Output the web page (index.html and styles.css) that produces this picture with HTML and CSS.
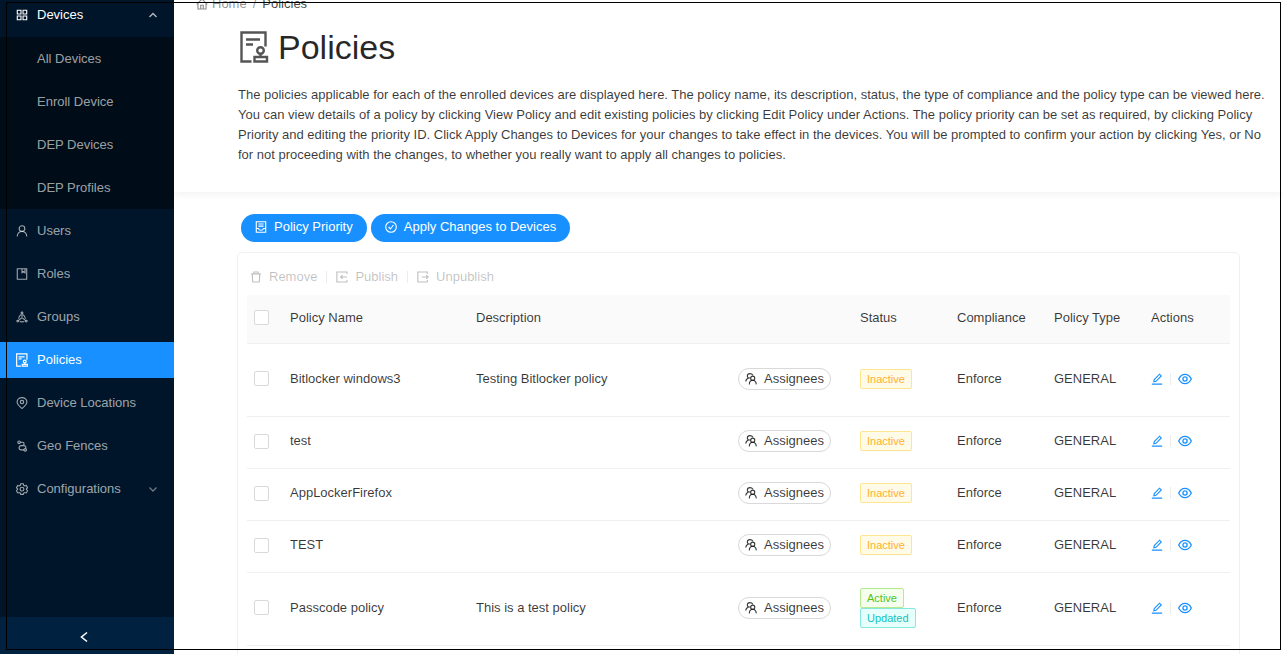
FILE: index.html
```html
<!DOCTYPE html>
<html lang="en">
<head>
<meta charset="utf-8">
<title>Policies</title>
<link rel="stylesheet" href="styles.css">
</head>
<body>
<svg class="sprite" aria-hidden="true">
  <symbol id="apps" viewBox="0 0 14 14"><path d="M1.500 1.500h4.300v4.300H1.500zM8.200 1.500h4.300v4.300H8.200zM1.500 8.200h4.300v4.300H1.500zM8.200 8.200h4.300v4.300H8.200z"/></symbol>
  <symbol id="user" viewBox="0 0 14 14"><circle cx="7" cy="4.200" r="3.300"/><path d="M1.400 13.500C1.600 10.200 3.600 7.600 7 7.600s5.400 2.600 5.600 5.900"/></symbol>
  <symbol id="book" viewBox="0 0 14 14"><path d="M1.500 .8h11v12.400h-11zM7 .8v4.700l1.800-1.400 1.700 1.400V.8"/></symbol>
  <symbol id="nodes" viewBox="0 0 14 14"><circle cx="7" cy="2.300" r="1"/><circle cx="2" cy="11.800" r="1"/><circle cx="12" cy="11.800" r="1"/><path d="M7 3.500v4M6.700 8 3 11M7.300 8l3.700 3M5.600 4.200C4.200 5.500 3.200 7 3 9M8.400 4.200C9.800 5.500 10.800 7 11 9M4.300 12.300c1.700.5 3.700.5 5.400 0"/></symbol>
  <symbol id="audit" viewBox="0 0 28 32"><path d="M11.500 30.500H1.500v-29h24v14M6 8.500h14M6 13.500h7"/><circle cx="20.500" cy="19.500" r="3.300"/><path d="M20.500 22.800v3.200M14.500 26h12.500v4.500H14.500z"/></symbol>
  <symbol id="pin" viewBox="0 0 14 14"><path d="M7 13.400C4.200 11.200 1.300 9 1.300 5.900 1.300 2.900 3.800.7 7 .7s5.700 2.200 5.700 5.200c0 3.100-2.900 5.300-5.700 7.500z"/><circle cx="7" cy="5.900" r="2"/></symbol>
  <symbol id="route" viewBox="0 0 14 14"><circle cx="3.600" cy="2.700" r="1.500"/><circle cx="10.800" cy="11.500" r="1.500"/><path d="M5.100 2.700h2.400c2.600 0 2.600 3.800 0 3.800H6c-3.200 0-3.200 5 0 5h3.300M5.500 6.600h3.700c2 0 2.700 1.500 2 3"/></symbol>
  <symbol id="gear" viewBox="0 0 14 14"><path d="M5.500.9h3l.5 1.800 1.200.7 1.800-.5 1.500 2.600-1.300 1.300v.9l1.300 1.300-1.500 2.600-1.800-.5-1.200.7-.5 1.500h-3L5 11.800l-1.200-.7-1.800.5L.5 9l1.300-1.300v-.9L.5 5.500 2 2.900l1.800.5L5 2.700z"/><circle cx="7" cy="7.200" r="2.200"/></symbol>
  <symbol id="up" viewBox="0 0 10 10"><path d="M1.500 7 5 3.500 8.500 7"/></symbol>
  <symbol id="down" viewBox="0 0 10 10"><path d="M1.500 3.500 5 7l3.500-3.500"/></symbol>
  <symbol id="left" viewBox="0 0 12 12"><path d="M9 1.500 3.500 6 9 10.500"/></symbol>
  <symbol id="home" viewBox="0 0 14 14"><path d="M.8 7.400 7 1.200l6.200 6.200M2.300 6.500v6.300h9.400V6.500M5.500 12.800V8.500h3v4.300"/></symbol>
  <symbol id="list" viewBox="0 0 14 14"><path d="M1.500.8h11v12.400h-11zM4 3.500h6M4 6h6M1.500 8.800h2.700c.3 1.200 1.400 2 2.800 2s2.500-.8 2.800-2h2.700"/></symbol>
  <symbol id="check" viewBox="0 0 14 14"><circle cx="7" cy="7" r="6.200"/><path d="m4.200 7 2.100 2.300 3.500-4.600"/></symbol>
  <symbol id="trash" viewBox="0 0 14 14"><path d="M1.300 3.400h11.400M4.500 3.400V1.200h5v2.200M2.600 3.400l.5 9.400h7.800l.5-9.400"/></symbol>
  <symbol id="import" viewBox="0 0 14 14"><path d="M12.800 3.500V1.200H1v11.600h11.800v-2.300M13 7H5.500M7.600 5 5.400 7l2.200 2"/></symbol>
  <symbol id="export" viewBox="0 0 14 14"><path d="M12 3.500V1.200H1v11.600h11v-2.300M5.500 7h7.500M10.900 5l2.200 2-2.200 2"/></symbol>
  <symbol id="team" viewBox="0 0 14 14"><circle cx="9" cy="6" r="2.400"/><path d="M5 13.300c.1-2.900 1.600-4.800 4-4.800s3.900 1.900 4.200 4.800M9.200 2.600C8.500 1.300 7.200.7 5.800.7 4 .7 2.700 1.900 2.700 3.500c0 1 .5 1.800 1.400 2.300C2 6.500 1 7.900.9 10M4.100 5.800l2.200.1"/></symbol>
  <symbol id="edit" viewBox="0 0 14 14"><path d="M1 13h12M3.300 10.300l.5-2.600L10 1.400l2 2-6.200 6.300z"/></symbol>
  <symbol id="eye" viewBox="0 0 14 12"><path d="M.7 6C2.100 3.100 4.200 1.300 7 1.300S11.900 3.100 13.300 6C11.900 8.900 9.800 10.700 7 10.700S2.100 8.900.7 6z"/><circle cx="7" cy="6" r="2.100"/></symbol>
</svg>

<div class="layout">
  <aside class="sidebar">
    <nav class="menu">
      <a class="item item-top open" href="#"><svg class="icon"><use href="#apps"/></svg><span>Devices</span><svg class="arrow"><use href="#up"/></svg></a>
      <div class="submenu">
        <a class="subitem" href="#">All Devices</a>
        <a class="subitem" href="#">Enroll Device</a>
        <a class="subitem" href="#">DEP Devices</a>
        <a class="subitem" href="#">DEP Profiles</a>
      </div>
      <a class="item" href="#"><svg class="icon"><use href="#user"/></svg><span>Users</span></a>
      <a class="item" href="#"><svg class="icon"><use href="#book"/></svg><span>Roles</span></a>
      <a class="item" href="#"><svg class="icon"><use href="#nodes"/></svg><span>Groups</span></a>
      <a class="item selected" href="#"><svg class="icon audit"><use href="#audit"/></svg><span>Policies</span></a>
      <a class="item" href="#"><svg class="icon"><use href="#pin"/></svg><span>Device Locations</span></a>
      <a class="item" href="#"><svg class="icon"><use href="#route"/></svg><span>Geo Fences</span></a>
      <a class="item" href="#"><svg class="icon"><use href="#gear"/></svg><span>Configurations</span><svg class="arrow"><use href="#down"/></svg></a>
    </nav>
    <button class="collapse" aria-label="Collapse menu"><svg class="icon"><use href="#left"/></svg></button>
  </aside>

  <main class="main">
    <header class="page-header">
      <nav class="breadcrumb"><a href="#"><svg class="icon"><use href="#home"/></svg>Home</a><span class="slash">/</span><span class="current">Policies</span></nav>
      <div class="intro">
        <h1 class="title"><svg class="title-icon"><use href="#audit"/></svg>Policies</h1>
        <p class="description">The policies applicable for each of the enrolled devices are displayed here. The policy name, its description, status, the type of compliance and the policy type can be viewed here. You can view details of a policy by clicking View Policy and edit existing policies by clicking Edit Policy under Actions. The policy priority can be set as required, by clicking Policy Priority and editing the priority ID. Click Apply Changes to Devices for your changes to take effect in the devices. You will be prompted to confirm your action by clicking Yes, or No for not proceeding with the changes, to whether you really want to apply all changes to policies.</p>
      </div>
    </header>

    <section class="content">
      <div class="actions">
        <button class="primary"><svg class="icon"><use href="#list"/></svg>Policy Priority</button>
        <button class="primary"><svg class="icon"><use href="#check"/></svg>Apply Changes to Devices</button>
      </div>
      <div class="card">
        <div class="toolbar">
          <button class="tool" disabled><svg class="icon"><use href="#trash"/></svg>Remove</button>
          <i class="divider"></i>
          <button class="tool" disabled><svg class="icon"><use href="#import"/></svg>Publish</button>
          <i class="divider"></i>
          <button class="tool" disabled><svg class="icon"><use href="#export"/></svg>Unpublish</button>
        </div>
        <table class="table">
          <colgroup><col class="c-check"><col class="c-name"><col><col class="c-assign"><col class="c-mid"><col class="c-mid"><col class="c-mid"><col class="c-last"></colgroup>
          <thead>
            <tr><th><input type="checkbox" aria-label="Select all"></th><th>Policy Name</th><th>Description</th><th></th><th>Status</th><th>Compliance</th><th>Policy Type</th><th>Actions</th></tr>
          </thead>
          <tbody>
            <tr class="tall"><td><input type="checkbox" aria-label="Select Bitlocker windows3"></td><td>Bitlocker windows3</td><td>Testing Bitlocker policy</td><td><button class="assignees"><svg class="icon"><use href="#team"/></svg>Assignees</button></td><td><span class="tag orange">Inactive</span></td><td>Enforce</td><td>GENERAL</td><td><div class="row-actions"><a href="#" aria-label="Edit"><svg class="icon"><use href="#edit"/></svg></a><i class="divider"></i><a href="#" aria-label="View"><svg class="icon"><use href="#eye"/></svg></a></div></td></tr>
            <tr><td><input type="checkbox" aria-label="Select test"></td><td>test</td><td></td><td><button class="assignees"><svg class="icon"><use href="#team"/></svg>Assignees</button></td><td><span class="tag orange">Inactive</span></td><td>Enforce</td><td>GENERAL</td><td><div class="row-actions"><a href="#" aria-label="Edit"><svg class="icon"><use href="#edit"/></svg></a><i class="divider"></i><a href="#" aria-label="View"><svg class="icon"><use href="#eye"/></svg></a></div></td></tr>
            <tr><td><input type="checkbox" aria-label="Select AppLockerFirefox"></td><td>AppLockerFirefox</td><td></td><td><button class="assignees"><svg class="icon"><use href="#team"/></svg>Assignees</button></td><td><span class="tag orange">Inactive</span></td><td>Enforce</td><td>GENERAL</td><td><div class="row-actions"><a href="#" aria-label="Edit"><svg class="icon"><use href="#edit"/></svg></a><i class="divider"></i><a href="#" aria-label="View"><svg class="icon"><use href="#eye"/></svg></a></div></td></tr>
            <tr><td><input type="checkbox" aria-label="Select TEST"></td><td>TEST</td><td></td><td><button class="assignees"><svg class="icon"><use href="#team"/></svg>Assignees</button></td><td><span class="tag orange">Inactive</span></td><td>Enforce</td><td>GENERAL</td><td><div class="row-actions"><a href="#" aria-label="Edit"><svg class="icon"><use href="#edit"/></svg></a><i class="divider"></i><a href="#" aria-label="View"><svg class="icon"><use href="#eye"/></svg></a></div></td></tr>
            <tr class="tall"><td><input type="checkbox" aria-label="Select Passcode policy"></td><td>Passcode policy</td><td>This is a test policy</td><td><button class="assignees"><svg class="icon"><use href="#team"/></svg>Assignees</button></td><td><span class="tag green">Active</span><span class="tag cyan">Updated</span></td><td>Enforce</td><td>GENERAL</td><td><div class="row-actions"><a href="#" aria-label="Edit"><svg class="icon"><use href="#edit"/></svg></a><i class="divider"></i><a href="#" aria-label="View"><svg class="icon"><use href="#eye"/></svg></a></div></td></tr>
          </tbody>
        </table>
      </div>
    </section>
  </main>
  <div class="frame"></div>
</div>
</body>
</html>
```

FILE: styles.css
```css
* { box-sizing: border-box; }

body {
  margin: 0;
  font-family: "Liberation Sans", Arial, sans-serif;
  font-size: 13px;
  line-height: 20px;
  color: rgba(0, 0, 0, 0.78);
  background: #fff;
}

a { color: inherit; text-decoration: none; }
button { font: inherit; cursor: pointer; }

.sprite { position: absolute; width: 0; height: 0; }

svg { fill: none; stroke: currentColor; stroke-width: 1.3; flex: none; }
.icon { width: 12px; height: 12px; }
.icon.audit { width: 12px; height: 14px; stroke-width: 2.8; }

.layout { position: relative; display: flex; height: 100vh; overflow: hidden; }

/* Outline drawn over the whole page */
.frame {
  position: absolute;
  inset: 2px 2px 4px 6px;
  z-index: 2;
  border: 1px solid #000;
  pointer-events: none;
}

/* Sidebar */
.sidebar {
  position: relative;
  z-index: 1;
  flex: none;
  width: 174px;
  display: flex;
  flex-direction: column;
  background: #001529;
  color: rgba(255, 255, 255, 0.62);
}
.menu { flex: 1; display: flex; flex-direction: column; gap: 7px; }
.item { display: flex; align-items: center; height: 36px; padding: 0 16px; }
.item span { margin-left: 9px; flex: 1; white-space: nowrap; }
.item-top { height: 30px; }
.open { color: #fff; }
.selected { background: #1890ff; color: #fff; }
.arrow { width: 10px; height: 10px; opacity: 0.7; }
.submenu { background: #000c17; margin-bottom: -3px; }
.subitem { display: flex; align-items: center; height: 43px; padding-left: 37px; }
.collapse {
  display: flex;
  align-items: center;
  justify-content: center;
  height: 37px;
  padding: 3px 7px 0 0;
  border: 0;
  background: #002140;
  color: #fff;
}
.collapse svg { stroke-width: 1.6; }

/* Page header */
.main { flex: 1; min-width: 0; }
.page-header { height: 192px; box-shadow: 0 2px 8px #f0f1f2; }
.breadcrumb {
  display: flex;
  align-items: center;
  height: 8px;
  padding-left: 22px;
  color: rgba(0, 0, 0, 0.45);
}
.breadcrumb a { display: flex; align-items: center; gap: 4px; }
.slash { margin: 0 6px; }
.current { color: rgba(0, 0, 0, 0.75); }
.intro { padding: 18px 12px 0 64px; }
.title {
  display: flex;
  align-items: center;
  gap: 8px;
  margin: 0;
  font-size: 34px;
  line-height: 42px;
  font-weight: 400;
  color: rgba(0, 0, 0, 0.85);
}
.title-icon { width: 32px; height: 33px; padding-bottom: 1px; stroke-width: 2.4; color: #555; }
.description { margin: 17px 0 0; }

/* Buttons over the table */
.content { padding: 22px 43px 0 63px; }
.actions { display: flex; gap: 4px; padding-left: 4px; }
.primary {
  display: flex;
  align-items: center;
  gap: 7px;
  height: 28px;
  padding: 0 14px 2px;
  border: 0;
  border-radius: 14px;
  background: #1890ff;
  color: #fff;
}
.card {
  margin-top: 10px;
  padding: 14px 9px;
  border: 1px solid #f0f0f0;
  border-radius: 5px;
}
.toolbar { display: flex; align-items: center; height: 20px; margin-bottom: 8px; padding-left: 3px; }
.tool {
  display: flex;
  align-items: center;
  gap: 7px;
  padding: 0;
  border: 0;
  background: none;
  color: rgba(0, 0, 0, 0.25);
}
.divider { width: 1px; height: 12px; margin: 0 9px; background: #ececec; }

/* Policy table */
.table { width: 100%; table-layout: fixed; border-collapse: separate; border-spacing: 0; }
.c-check { width: 29px; }
.c-name { width: 186px; }
.c-assign { width: 122px; }
.c-mid { width: 97px; }
.c-last { width: 93px; }
.table th, .table td {
  height: 52px;
  padding: 0 0 3px 14px;
  border-bottom: 1px solid #f0f0f0;
  text-align: left;
  font-weight: 400;
  white-space: nowrap;
}
.table th { height: 49px; background: #fafafa; }
.table .tall td { height: 73px; }
.table th:first-child, .table td:first-child { padding-left: 7px; }
.table input {
  appearance: none;
  display: block;
  width: 15px;
  height: 15px;
  margin: 0;
  border: 1px solid #d9d9d9;
  border-radius: 2px;
  background: #fff;
}
.assignees {
  display: flex;
  align-items: center;
  gap: 7px;
  height: 22px;
  padding: 0 6px;
  border: 1px solid #d9d9d9;
  border-radius: 11px;
  background: #fff;
  color: rgba(0, 0, 0, 0.78);
}
.tag {
  display: block;
  width: fit-content;
  height: 20px;
  padding: 0 6px;
  border: 1px solid;
  border-radius: 2px;
  font-size: 11px;
  line-height: 19px;
}
.orange { color: #ffb02e; background: #fffbe6; border-color: #ffe58f; }
.green { color: #52c41a; background: #f6ffed; border-color: #b7eb8f; }
.cyan { color: #13c2c2; background: #e6fffb; border-color: #87e8de; }
.row-actions { display: flex; align-items: center; color: #1890ff; }
.row-actions .icon { display: block; }
.row-actions .divider { margin: 0 7px; }
.row-actions a:last-child .icon { width: 14px; height: 12px; }
```
